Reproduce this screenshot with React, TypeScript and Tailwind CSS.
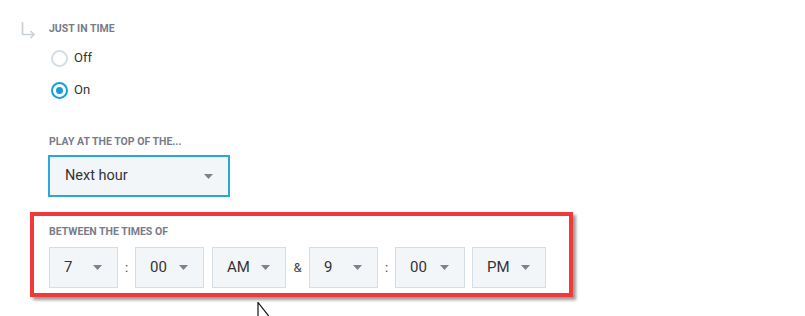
import React from 'react';

const Caret = () => (
  <svg width="9" height="5" viewBox="0 0 9 5" className="shrink-0">
    <path d="M0 0 H9 L4.5 5 Z" fill="#7d828b" />
  </svg>
);

const TimeSelect = ({ value, width }: { value: string; width: string }) => (
  <div className={`${width} h-[41px] flex items-center justify-between pl-[14px] pr-[15px] bg-[#f3f6f9] border border-[#d6dee5] text-[15px] text-[#333]`}>
    <span>{value}</span>
    <Caret />
  </div>
);

const Sep = ({ char, width }: { char: string; width: string }) => (
  <div className={`${width} flex items-center justify-center text-[13px] text-[#444]`}>{char}</div>
);

const Radio = ({ label, checked }: { label: string; checked?: boolean }) => (
  <div className="h-[32px] flex items-center gap-[6px] ml-[2px]">
    <div
      className={`w-[17px] h-[17px] rounded-full border-2 flex items-center justify-center ${checked ? 'border-[#1a9dd5]' : 'border-[#d3dde4]'}`}
    >
      {checked && <div className="w-[7px] h-[7px] rounded-full bg-[#1a9dd5]"></div>}
    </div>
    <span className="text-[13px] text-[#333]">{label}</span>
  </div>
);

const Label = ({ children }: { children: React.ReactNode }) => (
  <div className="h-[18px] leading-[18px] text-[10.5px] font-bold uppercase text-[#777c88]">{children}</div>
);

export default function App() {
  return (
    <div className="relative w-[805px] h-[316px] bg-white overflow-hidden" style={{ fontFamily: 'Roboto, "Liberation Sans", sans-serif' }}>
      {/* Just in time */}
      <div className="flex gap-[13px] pt-[20px] pl-[21px]">
        <svg width="15" height="17" viewBox="0 0 15 17" className="mt-[2px]">
          <path d="M1.5 0 V12.5 H13" fill="none" stroke="#c9d1d8" strokeWidth="1.7" />
          <path d="M9.5 9 L13 12.5 L9.5 16" fill="none" stroke="#c9d1d8" strokeWidth="1.7" />
        </svg>
        <div>
          <Label>Just in time</Label>
          <div className="mt-[4px]">
            <Radio label="Off" />
            <Radio label="On" checked />
          </div>
        </div>
      </div>

      {/* Play at the top of */}
      <div className="pl-[48px] mt-[27px]">
        <div className="pl-[1px]">
          <Label>Play at the top of the...</Label>
        </div>
        <div className="mt-[4px] w-[182px] h-[42px] flex items-center justify-between pl-[15px] pr-[15px] bg-[#f3f6f9] border-2 border-[#2aa7db] text-[14.5px] text-[#333]">
          <span>Next hour</span>
          <Caret />
        </div>
      </div>

      {/* Between the times of */}
      <div className="ml-[30px] mt-[15px] w-[543px] h-[85px] border-4 border-[#f03a3a] shadow-[3px_3px_3px_rgba(0,0,0,0.4)] pt-[7px] pl-[15px]">
        <Label>Between the times of</Label>
        <div className="mt-[6px] flex">
          <TimeSelect value="7" width="w-[69px]" />
          <Sep char=":" width="w-[17px]" />
          <TimeSelect value="00" width="w-[69px]" />
          <div className="w-[8px]"></div>
          <TimeSelect value="AM" width="w-[74px]" />
          <Sep char="&" width="w-[23px]" />
          <TimeSelect value="9" width="w-[69px]" />
          <Sep char=":" width="w-[17px]" />
          <TimeSelect value="00" width="w-[70px]" />
          <div className="w-[7px]"></div>
          <TimeSelect value="PM" width="w-[74px]" />
        </div>
      </div>

      {/* mouse cursor */}
      <svg className="absolute left-[257px] top-[302px]" width="14" height="16" viewBox="0 0 14 16">
        <path d="M1 0.5 L1 15 L12.5 15 Z" fill="#fff" stroke="#111" strokeWidth="1.2" />
      </svg>
    </div>
  );
}
